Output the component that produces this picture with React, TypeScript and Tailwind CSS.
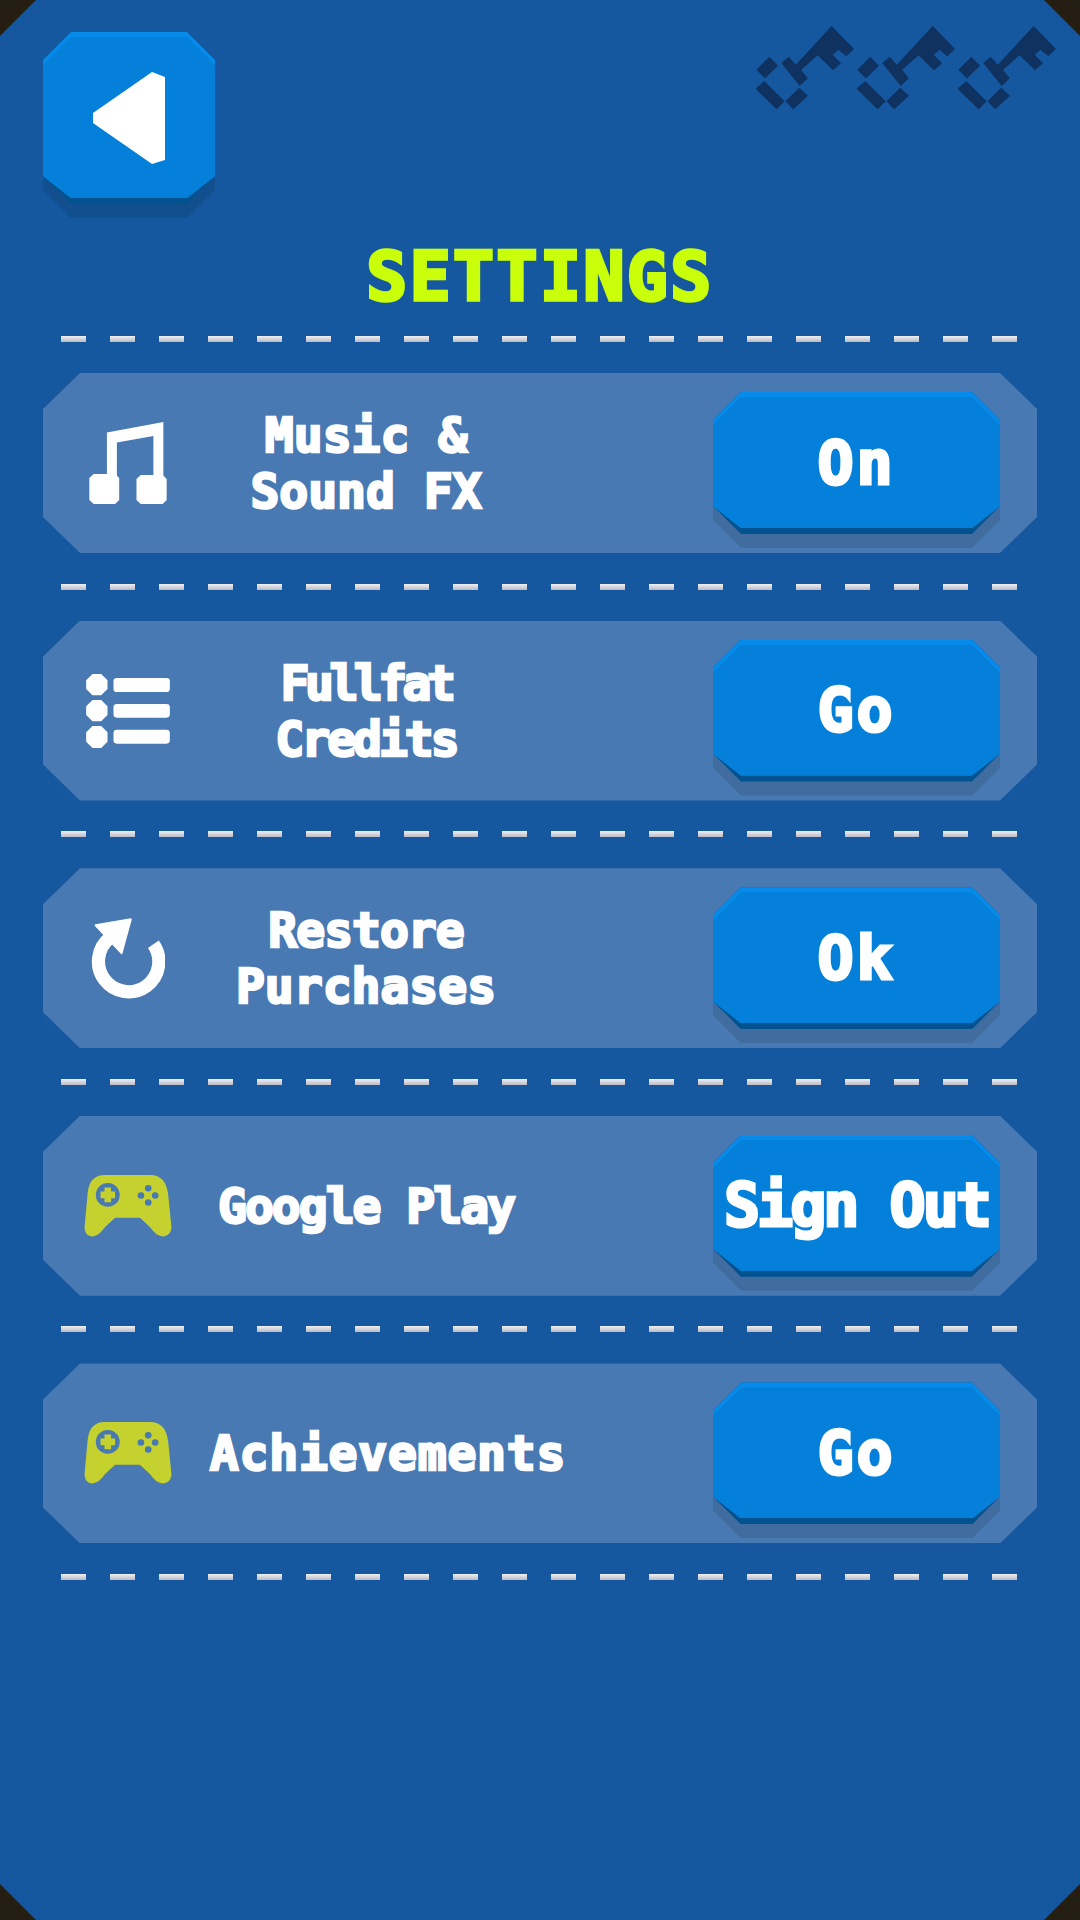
import { ReactNode } from "react";

const OCTAGON_28 =
  "[clip-path:polygon(28px_0,calc(100%-28px)_0,100%_28px,100%_calc(100%-28px),calc(100%-28px)_100%,28px_100%,0_calc(100%-28px),0_28px)]";
// the face sits on the lip, so its bottom corners are a bit shorter
const FACE_SHAPE =
  "[clip-path:polygon(28px_0,calc(100%-28px)_0,100%_28px,100%_calc(100%-22px),calc(100%-28px)_100%,28px_100%,0_calc(100%-22px),0_28px)]";

const GameButton = ({ className, children }: { className: string; children: ReactNode }) => (
  <div className={`relative shrink-0 ${className}`}>
    <div className={`absolute inset-x-0 top-[20px] bottom-0 bg-black/10 ${OCTAGON_28}`} />
    <div className={`absolute inset-x-0 top-0 bottom-[14px] bg-[#01528f] ${OCTAGON_28}`} />
    <div className={`absolute inset-x-0 top-0 bottom-[20px] bg-[#078bea] ${FACE_SHAPE}`} />
    <div className={`absolute inset-x-0 top-[5px] bottom-[20px] flex items-center justify-center bg-[#0480da] ${FACE_SHAPE}`}>
      {children}
    </div>
  </div>
);

const Divider = () => (
  <div className="ml-[18px] flex h-[6px] gap-[24.5px]">
    {Array.from({ length: 20 }).map((_, i) => (
      <div key={i} className="h-[6px] w-[24.5px] bg-linear-to-b from-[#f0f0f4] to-[#b9bac4]" />
    ))}
  </div>
);

const Key = () => (
  <svg width="98" height="83" viewBox="20 18 295 250" fill="#0f3260" stroke="#0f3260" strokeWidth="6">
    <polygon points="248,22 311,87 292,105 268,86 247,105 272,130 252,147 205,102 152,150 172,175 152,194 100,130 118,115 140,139" />
    <polygon points="60,115 82,138 47,172 25,150" />
    <polygon points="45,188 102,245 82,265 23,207" />
    <polygon points="150,208 172,228 132,265 113,245" />
  </svg>
);

const MusicIcon = () => (
  <svg width="78" height="82" viewBox="205 573 233 247" fill="white">
    <polygon points="258,605 428,573 428,740 398,740 398,615 288,635 288,740 258,740" />
    <polygon points="218,730 283,730 295,742 295,808 283,820 218,820 205,808 205,742" />
    <polygon points="360,733 426,733 438,745 438,808 426,820 360,820 347,808 347,745" />
  </svg>
);

const ListIcon = () => (
  <svg width="84" height="74" viewBox="105 100 251 222" fill="white">
    <polygon points="124,100 150,100 169,119 169,145 150,164 124,164 105,145 105,119" />
    <polygon points="124,178 150,178 169,197 169,223 150,242 124,242 105,223 105,197" />
    <polygon points="124,256 150,256 169,275 169,303 150,322 124,322 105,303 105,275" />
    <rect x="187" y="112" width="169" height="42" rx="10" />
    <rect x="187" y="190" width="169" height="41" rx="10" />
    <rect x="187" y="267" width="169" height="42" rx="10" />
  </svg>
);

const RestoreIcon = () => (
  <svg width="74" height="81" viewBox="120 838 223 244" fill="none">
    <path d="M308,917 A91,91 0 1 1 178,897" stroke="white" strokeWidth="40" />
    <polygon points="240,842 134,860 212,944" fill="white" stroke="white" strokeWidth="6" strokeLinejoin="round" />
  </svg>
);

const PadIcon = () => (
  <svg width="88" height="62" viewBox="103 108 262 187">
    <path
      d="M165,108 L300,108 C335,108 350,130 355,165 L365,265 C365,285 350,295 335,293 C320,290 312,280 300,265 L270,237 L195,237 L165,265 C153,280 145,290 130,293 C115,295 103,285 103,265 L112,165 C115,130 130,108 165,108 Z"
      fill="#c4d12f"
    />
    <circle cx="173" cy="168" r="36" fill="#4879b2" />
    <path d="M163,146 H183 V158 H195 V178 H183 V190 H163 V178 H151 V158 H163 Z" fill="#c4d12f" />
    <circle cx="295" cy="148" r="10" fill="#4879b2" />
    <circle cx="273" cy="170" r="10" fill="#4879b2" />
    <circle cx="316" cy="170" r="10" fill="#4879b2" />
    <circle cx="295" cy="191" r="10" fill="#4879b2" />
  </svg>
);

interface RowProps {
  icon: ReactNode;
  label: ReactNode;
  labelClass?: string;
  action: string;
  actionClass?: string;
}

const Row = ({ icon, label, labelClass = "w-[388px]", action, actionClass = "tracking-[3px]" }: RowProps) => (
  <div className="flex h-[180px] w-[994px] items-start bg-[#4879b2] pr-[37px] pl-[41px] [clip-path:polygon(37px_0,calc(100%-37px)_0,100%_36px,100%_calc(100%-36px),calc(100%-37px)_100%,37px_100%,0_calc(100%-36px),0_36px)]">
    <div className="flex h-full w-[88px] shrink-0 items-center justify-center">{icon}</div>
    <div className={`flex h-full items-center justify-center text-center text-[48px] leading-[56px] font-bold whitespace-nowrap text-white [-webkit-text-stroke:2.5px_white] ${labelClass}`}>
      <div>{label}</div>
    </div>
    <GameButton className="mt-[19px] ml-auto h-[156px] w-[287px]">
      <span className={`text-[60px] leading-none font-bold text-white [-webkit-text-stroke:3px_white] ${actionClass}`}>
        {action}
      </span>
    </GameButton>
  </div>
);

export default function App() {
  return (
    <div className="h-[1920px] w-[1080px] overflow-hidden bg-[#241f12] font-['DejaVu_Sans_Mono',monospace]">
      <div className="flex h-full w-full flex-col bg-[#15589f] pt-[26px] pl-[43px] [clip-path:polygon(36px_0,calc(100%-36px)_0,100%_36px,100%_calc(100%-36px),calc(100%-36px)_100%,36px_100%,0_calc(100%-36px),0_36px)]">
        <div className="flex items-start justify-between pr-[24px]">
          <GameButton className="mt-[6px] h-[186px] w-[172px]">
            <svg width="72" height="92" viewBox="94 73 72 92" fill="white">
              <polygon points="153,73 166,78 166,161 153,165 94,124 94,114" />
            </svg>
          </GameButton>
          <div className="flex">
            <Key />
            <div className="ml-[3px]"><Key /></div>
            <div className="ml-[3px]"><Key /></div>
          </div>
        </div>
        <h1 className="mt-[29px] mb-[29px] -ml-[43px] h-[60px] text-center text-[68px] leading-[60px] font-bold tracking-[2.5px] text-[#c9ff0a] [-webkit-text-stroke:3.5px_#c9ff0a]">
          SETTINGS
        </h1>
        <Divider />
        <div className="mt-[31px] mb-[30.6px]">
          <Row icon={<MusicIcon />} label={<>Music &amp;<br />Sound FX</>} action="On" />
        </div>
        <Divider />
        <div className="mt-[31px] mb-[30.6px]">
          <Row
            icon={<ListIcon />}
            label={<><span className="tracking-[-4.5px]">Fullfat</span><br /><span className="tracking-[-3px]">Credits</span></>}
            action="Go"
          />
        </div>
        <Divider />
        <div className="mt-[31px] mb-[30.6px]">
          <Row
            icon={<RestoreIcon />}
            label={<><span className="tracking-[-1px]">Restore</span><br />Purchases</>}
            action="Ok"
          />
        </div>
        <Divider />
        <div className="mt-[31px] mb-[30.6px]">
          <Row icon={<PadIcon />} label={<span className="tracking-[-2px]">Google Play</span>} action="Sign Out" actionClass="tracking-[-3px]" />
        </div>
        <Divider />
        <div className="mt-[31px] mb-[30.6px]">
          <Row icon={<PadIcon />} label="Achievements" labelClass="w-[432px] tracking-[0.8px]" action="Go" />
        </div>
        <Divider />
      </div>
    </div>
  );
}
